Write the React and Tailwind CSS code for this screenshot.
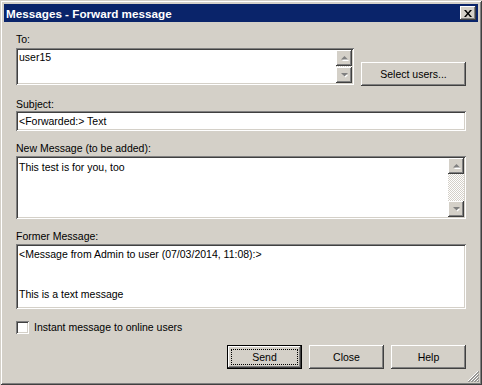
import React from 'react';

const FONT = "font-['Liberation_Sans',Arial,sans-serif]";
const RAISED = 'shadow-[inset_-1px_-1px_#404040,inset_1px_1px_#ffffff,inset_-2px_-2px_#808080,inset_2px_2px_#d4d0c8]';
const SUNKEN = 'shadow-[inset_1px_1px_#808080,inset_-1px_-1px_#ffffff,inset_2px_2px_#404040,inset_-2px_-2px_#d4d0c8]';
const DITHER = 'bg-[repeating-conic-gradient(#ffffff_0%_25%,#d4d0c8_0%_50%)] bg-[length:2px_2px]';

function Arrow({ down }) {
  return (
    <svg width="9" height="6" viewBox="0 0 9 6">
      {down ? (
        <>
          <path d="M2 2h5L4.5 4.5z" fill="#ffffff" transform="translate(1 1)" />
          <path d="M1 1h7L4.5 4.5z" fill="#808080" />
        </>
      ) : (
        <>
          <path d="M4.5 1.5L8 5H1z" fill="#ffffff" transform="translate(1 1)" />
          <path d="M4.5 1L8 4.5H1z" fill="#808080" />
        </>
      )}
    </svg>
  );
}

function ScrollBtn({ down }) {
  return (
    <div className={`w-[16px] h-[16px] bg-[#d4d0c8] flex items-center justify-center ${RAISED}`}>
      <Arrow down={down} />
    </div>
  );
}

function Scrollbar() {
  return (
    <div className={`w-[16px] h-full flex flex-col justify-between ${DITHER}`}>
      <ScrollBtn />
      <ScrollBtn down />
    </div>
  );
}

function Button({ children, isDefault, className = '' }) {
  if (isDefault) {
    return (
      <div className={`h-[24px] w-[75px] border border-black bg-[#d4d0c8] ${className}`}>
        <div className={`h-full w-full flex items-center justify-center p-[3px] ${RAISED}`}>
          <div className="h-full w-full border border-dotted border-black flex items-center justify-center">
            {children}
          </div>
        </div>
      </div>
    );
  }
  return (
    <div className={`h-[24px] bg-[#d4d0c8] flex items-center justify-center ${RAISED} ${className}`}>
      {children}
    </div>
  );
}

export default function App() {
  return (
    <div className={`w-[482px] h-[385px] bg-[#d4d0c8] p-[4px] flex flex-col text-[10.5px] leading-[13px] text-black ${FONT} shadow-[inset_1px_1px_#d4d0c8,inset_-1px_-1px_#404040,inset_2px_2px_#ffffff,inset_-2px_-2px_#808080] relative`}>
      {/* Title bar */}
      <div className="h-[18px] bg-[#0a246a] flex items-center justify-between pl-[2px] pr-[2px]">
        <span className="text-white font-bold text-[11.7px]">Messages - Forward message</span>
        <div className={`w-[16px] h-[14px] bg-[#d4d0c8] flex items-center justify-center ${RAISED}`}>
          <svg width="8" height="7" viewBox="0 0 8 7">
            <path d="M0 0h2l2 2.5L6 0h2L5 3.5 8 7H6L4 4.5 2 7H0l3-3.5z" fill="#000" />
          </svg>
        </div>
      </div>

      <div className="px-[12px] flex flex-col">
        {/* To */}
        <div className="mt-[11px]">To:</div>
        <div className="flex items-start mt-[2px]">
          <div className={`w-[338px] h-[37px] bg-white flex p-[2px] ${SUNKEN}`}>
            <div className="flex-1 px-[1px] pt-[1px]">user15</div>
            <div className="h-[33px]">
              <Scrollbar />
            </div>
          </div>
          <Button className="w-[105px] ml-[7px] mt-[14px]">Select users...</Button>
        </div>

        {/* Subject */}
        <div className="mt-[12px]">Subject:</div>
        <div className={`h-[20px] bg-white p-[2px] px-[3px] flex items-center ${SUNKEN}`}>
          &lt;Forwarded:&gt; Text
        </div>

        {/* New message */}
        <div className="mt-[11px]">New Message (to be added):</div>
        <div className={`mt-[1px] h-[63px] bg-white flex p-[2px] ${SUNKEN}`}>
          <div className="flex-1 px-[1px] pt-[3px]">This test is for you, too</div>
          <div className="h-[59px]">
            <Scrollbar />
          </div>
        </div>

        {/* Former message */}
        <div className="mt-[11px]">Former Message:</div>
        <div className={`mt-[1px] h-[65px] bg-white p-[2px] px-[3px] pt-[4px] ${SUNKEN}`}>
          <div>&lt;Message from Admin to user (07/03/2014, 11:08):&gt;</div>
          <div className="h-[13px]" />
          <div className="h-[13px]" />
          <div className="mt-[1px]">This is a text message</div>
        </div>

        {/* Checkbox */}
        <div className="mt-[12px] flex items-center">
          <div className={`w-[13px] h-[13px] bg-white ${SUNKEN}`} />
          <span className="ml-[5px]">Instant message to online users</span>
        </div>

        {/* Buttons */}
        <div className="mt-[11px] flex justify-end gap-[7px]">
          <Button isDefault>Send</Button>
          <Button className="w-[75px]">Close</Button>
          <Button className="w-[75px]">Help</Button>
        </div>
      </div>

      {/* Resize grip */}
      <svg className="absolute right-[3px] bottom-[3px]" width="12" height="12" viewBox="0 0 12 12">
        <path d="M11 1L1 11M11 4L4 11M11 7L7 11M11 10L10 11" stroke="#ffffff" strokeWidth="1" />
        <path d="M12 1L1 12M12 2L2 12M12 4L4 12M12 5L5 12M12 7L7 12M12 8L8 12M12 10L10 12M12 11L11 12" stroke="#808080" strokeWidth="0.7" />
      </svg>
    </div>
  );
}
